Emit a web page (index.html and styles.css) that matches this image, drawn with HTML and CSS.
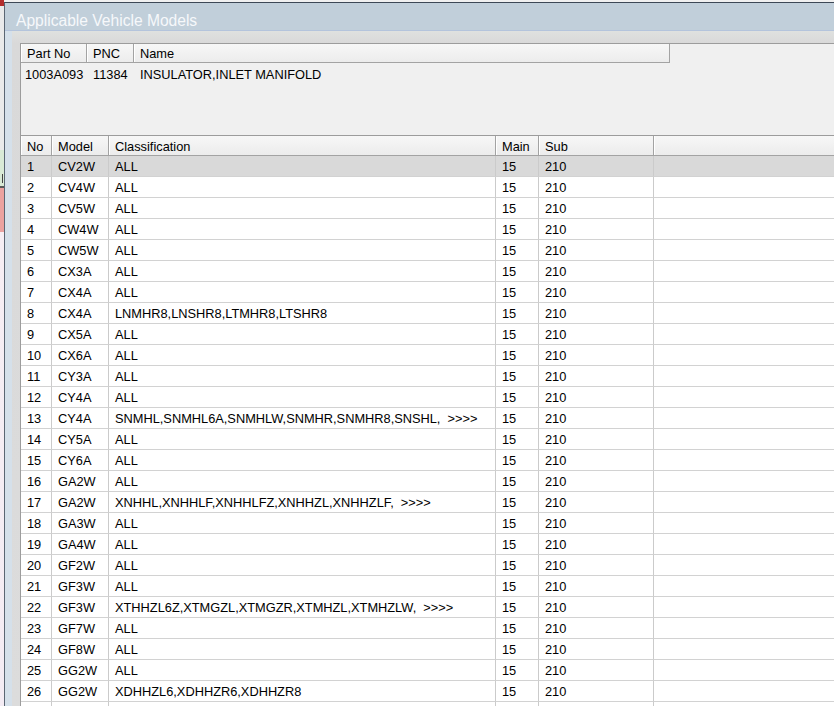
FILE: index.html
```html
<!DOCTYPE html>
<html>
<head>
<meta charset="utf-8">
<link rel="stylesheet" href="styles.css">
</head>
<body>
<div class="desk">
  <div class="strip"><span class="strip-mark"></span></div>
  <div class="window">
    <div class="titlebar">Applicable Vehicle Models</div>
    <div class="frame">
      <div class="client">
        <div class="lv lv1">
          <table class="grid1">
            <thead>
              <tr><th class="c-part">Part No</th><th class="c-pnc">PNC</th><th class="c-name">Name</th><th class="c-rest"></th></tr>
            </thead>
            <tbody>
              <tr><td class="first">1003A093</td><td>11384</td><td>INSULATOR,INLET MANIFOLD</td><td></td></tr>
            </tbody>
          </table>
        </div>
        <div class="lv lv2">
          <table class="grid2">
            <thead>
              <tr><th class="c-no">No</th><th class="c-model">Model</th><th class="c-class">Classification</th><th class="c-main">Main</th><th class="c-sub">Sub</th><th class="c-fill"></th></tr>
            </thead>
            <tbody>
              <tr class="sel"><td>1</td><td>CV2W</td><td>ALL</td><td>15</td><td>210</td><td></td></tr>
              <tr><td>2</td><td>CV4W</td><td>ALL</td><td>15</td><td>210</td><td></td></tr>
              <tr><td>3</td><td>CV5W</td><td>ALL</td><td>15</td><td>210</td><td></td></tr>
              <tr><td>4</td><td>CW4W</td><td>ALL</td><td>15</td><td>210</td><td></td></tr>
              <tr><td>5</td><td>CW5W</td><td>ALL</td><td>15</td><td>210</td><td></td></tr>
              <tr><td>6</td><td>CX3A</td><td>ALL</td><td>15</td><td>210</td><td></td></tr>
              <tr><td>7</td><td>CX4A</td><td>ALL</td><td>15</td><td>210</td><td></td></tr>
              <tr><td>8</td><td>CX4A</td><td>LNMHR8,LNSHR8,LTMHR8,LTSHR8</td><td>15</td><td>210</td><td></td></tr>
              <tr><td>9</td><td>CX5A</td><td>ALL</td><td>15</td><td>210</td><td></td></tr>
              <tr><td>10</td><td>CX6A</td><td>ALL</td><td>15</td><td>210</td><td></td></tr>
              <tr><td>11</td><td>CY3A</td><td>ALL</td><td>15</td><td>210</td><td></td></tr>
              <tr><td>12</td><td>CY4A</td><td>ALL</td><td>15</td><td>210</td><td></td></tr>
              <tr><td>13</td><td>CY4A</td><td>SNMHL,SNMHL6A,SNMHLW,SNMHR,SNMHR8,SNSHL,  &gt;&gt;&gt;&gt;</td><td>15</td><td>210</td><td></td></tr>
              <tr><td>14</td><td>CY5A</td><td>ALL</td><td>15</td><td>210</td><td></td></tr>
              <tr><td>15</td><td>CY6A</td><td>ALL</td><td>15</td><td>210</td><td></td></tr>
              <tr><td>16</td><td>GA2W</td><td>ALL</td><td>15</td><td>210</td><td></td></tr>
              <tr><td>17</td><td>GA2W</td><td>XNHHL,XNHHLF,XNHHLFZ,XNHHZL,XNHHZLF,  &gt;&gt;&gt;&gt;</td><td>15</td><td>210</td><td></td></tr>
              <tr><td>18</td><td>GA3W</td><td>ALL</td><td>15</td><td>210</td><td></td></tr>
              <tr><td>19</td><td>GA4W</td><td>ALL</td><td>15</td><td>210</td><td></td></tr>
              <tr><td>20</td><td>GF2W</td><td>ALL</td><td>15</td><td>210</td><td></td></tr>
              <tr><td>21</td><td>GF3W</td><td>ALL</td><td>15</td><td>210</td><td></td></tr>
              <tr><td>22</td><td>GF3W</td><td>XTHHZL6Z,XTMGZL,XTMGZR,XTMHZL,XTMHZLW,  &gt;&gt;&gt;&gt;</td><td>15</td><td>210</td><td></td></tr>
              <tr><td>23</td><td>GF7W</td><td>ALL</td><td>15</td><td>210</td><td></td></tr>
              <tr><td>24</td><td>GF8W</td><td>ALL</td><td>15</td><td>210</td><td></td></tr>
              <tr><td>25</td><td>GG2W</td><td>ALL</td><td>15</td><td>210</td><td></td></tr>
              <tr><td>26</td><td>GG2W</td><td>XDHHZL6,XDHHZR6,XDHHZR8</td><td>15</td><td>210</td><td></td></tr>
              <tr><td></td><td></td><td></td><td></td><td></td><td></td></tr>
            </tbody>
          </table>
        </div>
      </div>
    </div>
  </div>
</div>
</body>
</html>
```

FILE: styles.css
```css
html, body {
  margin: 0;
  padding: 0;
}
body {
  width: 834px;
  height: 706px;
  overflow: hidden;
  font-family: "Liberation Sans", Arial, sans-serif;
  font-size: 12.8px;
  color: #000;
  background: #f0f0f0;
}
.desk {
  display: flex;
  height: 706px;
}
.strip {
  width: 4px;
  flex: none;
  position: relative;
  overflow: hidden;
  background: linear-gradient(to bottom,
    #b32d2d 0px, #b32d2d 6px,
    #eaeaea 6px, #eaeaea 150px,
    #d9ead6 150px, #d9ead6 186px,
    #5a5a5a 186px, #5a5a5a 188px,
    #eba2a0 188px, #eba2a0 232px,
    #f6eef4 232px, #f4ecf4 706px);
}
.strip-mark {
  position: absolute;
  left: 2px;
  top: 174px;
  width: 1px;
  height: 9px;
  background: #444;
}
.window {
  flex: 1;
  margin-top: 2px;
  border-top: 1px solid #3d4856;
  border-left: 1px solid #5b6673;
  background: #d5e0ea;
  display: flex;
  flex-direction: column;
  min-width: 0;
}
.titlebar {
  height: 23px;
  line-height: 27px;
  padding-top: 4px;
  padding-left: 11px;
  background: #c1cfda;
  color: #f6f8fa;
  font-size: 15.6px;
  border-bottom: 1px solid #b4c4dc;
  white-space: nowrap;
  overflow: hidden;
}
.frame {
  flex: 1;
  padding-left: 7px;
  display: flex;
  min-height: 0;
}
.client {
  flex: 1;
  padding-top: 12px;
  padding-left: 8px;
  background: linear-gradient(to bottom, #dfe1df 0px, #d9d9d9 12px, #dcdcdc 100%);
  display: flex;
  flex-direction: column;
  min-width: 0;
}
.lv {
  border-left: 1px solid #9c9c9c;
  border-top: 1px solid #9c9c9c;
  background: #f0f0f0;
}
.lv1 {
  height: 91px;
  flex: none;
}
.lv2 {
  flex: 1;
  background: #fff;
  overflow: hidden;
}
table {
  border-collapse: separate;
  border-spacing: 0;
  table-layout: fixed;
  width: 100%;
}
th, td {
  box-sizing: border-box;
  padding: 1px 0 0 6px;
  text-align: left;
  font-weight: normal;
  white-space: pre;
  overflow: hidden;
}
th {
  height: 19px;
  background: linear-gradient(to bottom, #f7f7f7, #ececec);
  border-right: 1px solid #a3a3a3;
  box-shadow: inset 1px 0 0 #ffffff;
  vertical-align: middle;
}
.grid1 th {
  border-bottom: 1px solid #a3a3a3;
}
.grid1 th.c-rest {
  background: #f0f0f0;
  border: none;
  box-shadow: none;
}
.c-part { width: 66px; }
.c-pnc { width: 47px; }
.c-name { width: 536px; }
.grid1 td {
  height: 22px;
  vertical-align: middle;
}
.grid1 td.first {
  padding-left: 4px;
}
.grid2 th {
  border-bottom: 1px solid #a3a3a3;
  height: 20px;
}
.grid2 th.c-fill {
  border-right: none;
}
.c-no { width: 31px; }
.c-model { width: 57px; }
.c-class { width: 387px; }
.c-main { width: 43px; }
.c-sub { width: 115px; }
.grid2 td {
  height: 21px;
  border-right: 1px solid #cbcbcb;
  border-bottom: 1px solid #d2d2d2;
  vertical-align: middle;
}
.grid2 td:last-child {
  border-right: none;
}
.grid2 tr.sel td {
  background: #d9d9d9;
}
```
